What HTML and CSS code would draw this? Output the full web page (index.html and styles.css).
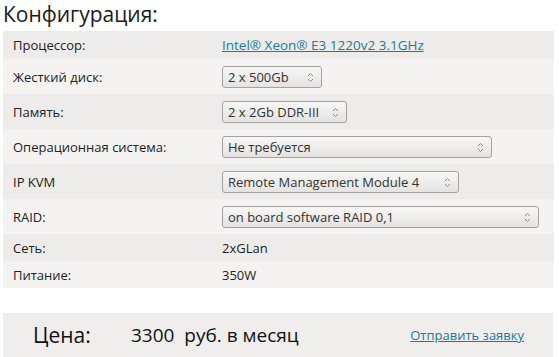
FILE: index.html
```html
<!DOCTYPE html>
<html lang="ru">
<head>
    <meta charset="UTF-8">
    <title>Конфигурация сервера</title>
    <link rel="stylesheet" href="styles.css">
</head>
<body>
    <h2 class="title">Конфигурация:</h2>
    <table class="config">
        <tr class="h28">
            <td class="name">Процессор:</td>
            <td><a href="#">Intel® Xeon® E3 1220v2 3.1GHz</a></td>
        </tr>
        <tr>
            <td class="name">Жесткий диск:</td>
            <td><span class="sel"><select style="width:100px"><option>2 x 500Gb</option></select><svg viewBox="0 0 7 11" width="7" height="11"><path d="M1 4 L3.5 1.5 L6 4" /><path d="M1 7 L3.5 9.5 L6 7" /></svg></span></td>
        </tr>
        <tr>
            <td class="name">Память:</td>
            <td><span class="sel"><select style="width:125px"><option>2 x 2Gb DDR-III</option></select><svg viewBox="0 0 7 11" width="7" height="11"><path d="M1 4 L3.5 1.5 L6 4" /><path d="M1 7 L3.5 9.5 L6 7" /></svg></span></td>
        </tr>
        <tr>
            <td class="name">Операционная система:</td>
            <td><span class="sel"><select style="width:270px"><option>Не требуется</option></select><svg viewBox="0 0 7 11" width="7" height="11"><path d="M1 4 L3.5 1.5 L6 4" /><path d="M1 7 L3.5 9.5 L6 7" /></svg></span></td>
        </tr>
        <tr>
            <td class="name">IP KVM</td>
            <td><span class="sel"><select style="width:237px"><option>Remote Management Module 4</option></select><svg viewBox="0 0 7 11" width="7" height="11"><path d="M1 4 L3.5 1.5 L6 4" /><path d="M1 7 L3.5 9.5 L6 7" /></svg></span></td>
        </tr>
        <tr>
            <td class="name">RAID:</td>
            <td><span class="sel"><select style="width:317px"><option>on board software RAID 0,1</option></select><svg viewBox="0 0 7 11" width="7" height="11"><path d="M1 4 L3.5 1.5 L6 4" /><path d="M1 7 L3.5 9.5 L6 7" /></svg></span></td>
        </tr>
        <tr class="h27">
            <td class="name">Сеть:</td>
            <td>2xGLan</td>
        </tr>
        <tr class="h27">
            <td class="name">Питание:</td>
            <td>350W</td>
        </tr>
    </table>
    <div class="price">
        <span class="price-label">Цена:</span>
        <span class="price-value">3300&nbsp; руб. в месяц</span>
        <a href="#" class="order">Отправить заявку</a>
    </div>
</body>
</html>
```

FILE: styles.css
```css
body { margin: 0; font-family: "Open Sans", "DejaVu Sans", sans-serif; color: #222; background: #fff; }
.title { margin: 0 0 3px 3px; font-size: 21px; font-weight: normal; line-height: 28px; color: #1a1a1a; }
.config { margin-left: 3px; width: 551px; border-collapse: collapse; font-size: 13px; }
.config td { padding: 0 0 0 2px; height: 35px; vertical-align: middle; }
.config tr:nth-child(odd) { background: #edeceb; }
.config tr:nth-child(even) { background: #f4f3f2; }
.config tr.h28 td { height: 28px; }
.config tr.h27 td { height: 27px; }
.config td.name { width: 207px; padding-left: 10px; }
.config a { color: #1b7a9a; font-size: 13.5px; }
.sel { position: relative; display: inline-block; vertical-align: middle; }
.sel select { appearance: none; -webkit-appearance: none; height: 22px; padding: 0 0 0 5px; border: 1px solid #a3a29f; border-radius: 3px; background: linear-gradient(#f7f7f6, #e4e3e1); font: 13px "Open Sans", "DejaVu Sans", sans-serif; color: #333; }
.sel svg { position: absolute; right: 8px; top: 6px; fill: none; stroke: #8a8a8a; stroke-width: 1; }
.price { margin: 25px 6px 0 3px; height: 44px; background: #efeeed; display: flex; align-items: center; }
.price-label { font-size: 21px; padding-left: 30px; width: 98px; color: #111; }
.price-value { font-size: 19px; color: #111; }
.order { margin-left: auto; margin-right: 29px; font-size: 13px; color: #1b7a9a; }
```
